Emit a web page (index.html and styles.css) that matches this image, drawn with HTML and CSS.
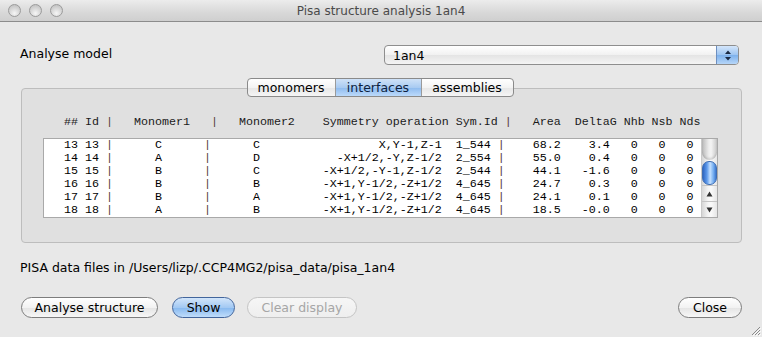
FILE: index.html
```html
<!DOCTYPE html>
<html>
<head>
<meta charset="utf-8">
<link rel="stylesheet" href="styles.css">
</head>
<body>
<div class="window">
  <div class="titlebar">
    <div class="lights"><span class="light"></span><span class="light"></span><span class="light"></span></div>
    <div class="title">Pisa structure analysis 1an4</div>
    <div></div>
  </div>
  <div class="content">
    <div class="model-row">
      <span class="label">Analyse model</span>
      <div class="select">
        <span class="select-text">1an4</span>
        <span class="select-btn">
          <svg width="8" height="11" viewBox="0 0 8 11"><path d="M4 0.5 L7 4 L1 4 Z" fill="#1a2a44"/><path d="M4 10.5 L7 7 L1 7 Z" fill="#1a2a44"/></svg>
        </span>
      </div>
    </div>
    <div class="tabs-wrap">
      <div class="tabs">
        <span class="tab">monomers</span><span class="tab active">interfaces</span><span class="tab">assemblies</span>
      </div>
      <div class="group">
<pre class="header">## Id <span class="sep">|</span>   Monomer1   <span class="sep">|</span>   Monomer2    Symmetry operation Sym.Id <span class="sep">|</span>   Area  DeltaG Nhb Nsb Nds</pre>
        <div class="list">
<pre class="rows">13 13 <span class="sep">|</span>      C      <span class="sep">|</span>      C                 X,Y-1,Z-1  1_544 <span class="sep">|</span>    68.2    3.4   0   0   0
14 14 <span class="sep">|</span>      A      <span class="sep">|</span>      D           -X+1/2,-Y,Z-1/2  2_554 <span class="sep">|</span>    55.0    0.4   0   0   0
15 15 <span class="sep">|</span>      B      <span class="sep">|</span>      C         -X+1/2,-Y-1,Z-1/2  2_544 <span class="sep">|</span>    44.1   -1.6   0   0   0
16 16 <span class="sep">|</span>      B      <span class="sep">|</span>      B         -X+1,Y-1/2,-Z+1/2  4_645 <span class="sep">|</span>    24.7    0.3   0   0   0
17 17 <span class="sep">|</span>      B      <span class="sep">|</span>      A         -X+1,Y-1/2,-Z+1/2  4_645 <span class="sep">|</span>    24.1    0.1   0   0   0
18 18 <span class="sep">|</span>      A      <span class="sep">|</span>      B         -X+1,Y-1/2,-Z+1/2  4_645 <span class="sep">|</span>    18.5   -0.0   0   0   0</pre>
          <div class="scrollbar">
            <div class="sb-track">
              <div class="sb-cap"></div>
              <div class="sb-thumb"></div>
            </div>
            <div class="sb-btn"><svg width="7" height="6" viewBox="0 0 7 6"><path d="M3.5 0.5 L6.5 5.5 L0.5 5.5 Z" fill="#333"/></svg></div>
            <div class="sb-btn"><svg width="7" height="6" viewBox="0 0 7 6"><path d="M3.5 5.5 L6.5 0.5 L0.5 0.5 Z" fill="#333"/></svg></div>
          </div>
        </div>
      </div>
    </div>
    <div class="info">PISA data files in /Users/lizp/.CCP4MG2/pisa_data/pisa_1an4</div>
    <div class="buttons">
      <span class="btn">Analyse structure</span>
      <span class="btn default">Show</span>
      <span class="btn disabled">Clear display</span>
      <span class="btn close">Close</span>
    </div>
  </div>
  <svg class="grip" width="12" height="12" viewBox="0 0 12 12">
    <path d="M11 3 L3 11 M11 6 L6 11 M11 9 L9 11" stroke="#8a8a8a" stroke-width="1"/>
    <path d="M12 4 L4 12 M12 7 L7 12 M12 10 L10 12" stroke="#fafafa" stroke-width="1"/>
  </svg>
</div>
</body>
</html>
```

FILE: styles.css
```css
html, body {
  margin: 0;
  padding: 0;
}
body {
  width: 762px;
  height: 337px;
  overflow: hidden;
  background: #e8e8e8;
  font-family: "DejaVu Sans", "Liberation Sans", sans-serif;
  font-size: 12px;
  color: #000;
}
.window {
  position: relative;
  width: 762px;
  height: 337px;
  background: #e8e8e8;
}
.titlebar {
  height: 21px;
  border-bottom: 1px solid #8c8c8c;
  background: linear-gradient(to bottom, #ececec, #d8d8d8 60%, #cfcfcf);
  display: grid;
  grid-template-columns: 1fr auto 1fr;
  align-items: center;
}
.lights {
  display: flex;
  gap: 8px;
  padding-left: 8px;
}
.light {
  width: 11px;
  height: 11px;
  border-radius: 50%;
  border: 1px solid #9b9b9b;
  background: radial-gradient(circle at 50% 75%, #f6f6f6 0%, #dadada 45%, #b9b9b9 100%);
}
.title {
  font-size: 12px;
  color: #4a4a4a;
  padding-top: 1px;
}
.content {
  padding: 23px 20px 0 21px;
}
.model-row {
  display: flex;
  align-items: center;
  height: 20px;
}
.label {
  font-size: 12.5px;
  margin-left: -1px;
  margin-top: -4px;
}
.select {
  margin-left: auto;
  margin-right: 3px;
  width: 355px;
  height: 20px;
  box-sizing: border-box;
  border: 1px solid #8e8e8e;
  border-radius: 4px;
  background: linear-gradient(to bottom, #ffffff, #f1f1f1 50%, #e4e4e4 51%, #f4f4f4);
  display: flex;
  align-items: center;
  overflow: hidden;
}
.select-text {
  flex: 1;
  padding-left: 8px;
  font-size: 12.5px;
}
.select-btn {
  width: 21px;
  height: 100%;
  border-left: 1px solid #6d8fc0;
  background: linear-gradient(to bottom, #d4e6fb, #9cc4f1 50%, #7db1ec 51%, #b6d6f9);
  display: flex;
  align-items: center;
  justify-content: center;
}
.tabs-wrap {
  margin-top: 13px;
  display: flex;
  flex-direction: column;
  align-items: center;
}
.tabs {
  position: relative;
  z-index: 1;
  display: flex;
  height: 19px;
  box-sizing: border-box;
  border: 1px solid #8a8a8a;
  border-radius: 4px;
  overflow: hidden;
  background: linear-gradient(to bottom, #ffffff, #f3f3f3 50%, #e6e6e6 51%, #f5f5f5);
  margin-left: -3px;
}
.tab {
  display: flex;
  align-items: center;
  justify-content: center;
  font-size: 12.5px;
  border-left: 1px solid #9a9a9a;
  padding-bottom: 1px;
}
.tab:nth-child(1) { width: 87px; border-left: none; }
.tab:nth-child(2) { width: 85px; }
.tab:nth-child(3) { width: 91px; }
.tab.active {
  background: linear-gradient(to bottom, #cfe2f8, #a9cbf2 50%, #8dbaee 51%, #bcdafb);
  color: #0c1f3f;
}
.group {
  align-self: stretch;
  margin-top: -9px;
  height: 155px;
  box-sizing: border-box;
  border: 1px solid #bdbdbd;
  border-radius: 4px;
  background: #e0e0e0;
  padding: 27px 23px 0 21px;
}
pre {
  margin: 0;
  font-family: "Liberation Mono", "DejaVu Sans Mono", monospace;
  font-size: 11.667px;
  line-height: 13px;
  white-space: pre;
}
.header {
  padding-left: 21px;
  color: #1a1a1a;
}
.sep {
  color: #5a3c3c;
}
.list {
  margin-top: 9px;
  height: 80px;
  box-sizing: border-box;
  border: 1px solid #a9a9a9;
  background: #fff;
  display: flex;
}
.rows {
  flex: 1;
  padding-left: 20px;
  overflow: hidden;
}
.scrollbar {
  width: 15px;
  display: flex;
  flex-direction: column;
  border-left: 1px solid #c9c9c9;
  background: linear-gradient(to right, #d6d6d6, #f4f4f4 40%, #fafafa 60%, #e6e6e6);
}
.sb-track {
  flex: 1;
  display: flex;
  flex-direction: column;
}
.sb-cap {
  height: 21px;
  border-radius: 0 0 8px 8px;
  background: linear-gradient(to right, #b9b9b9, #ececec 45%, #f4f4f4 60%, #c8c8c8);
  box-shadow: inset 0 -2px 2px rgba(0,0,0,0.12);
}
.sb-thumb {
  margin-top: 1px;
  height: 24px;
  border-radius: 7px;
  border: 1px solid #3e6db3;
  box-sizing: border-box;
  background: linear-gradient(to right, #2f66c2, #5d99ea 30%, #c4e0ff 55%, #75aef0 80%, #3c77cf);
}
.sb-btn {
  height: 15px;
  border-top: 1px solid #c4c4c4;
  display: flex;
  align-items: center;
  justify-content: center;
}
.info {
  margin-top: 17px;
  font-size: 12.5px;
  line-height: 16px;
  margin-left: -1px;
}
.buttons {
  margin-top: 21px;
  display: flex;
  align-items: center;
}
.btn {
  height: 21px;
  box-sizing: border-box;
  border: 1px solid #7d7d7d;
  border-radius: 11px;
  background: linear-gradient(to bottom, #ffffff, #f2f2f2 50%, #e4e4e4 51%, #f7f7f7);
  display: flex;
  align-items: center;
  justify-content: center;
  font-size: 12.5px;
  padding-bottom: 1px;
}
.btn:nth-child(1) { width: 137px; }
.btn.default {
  width: 63px;
  margin-left: 14px;
  border-color: #42659c;
  background: linear-gradient(to bottom, #d2e5fa, #a3c9f3 50%, #86b8ef 51%, #c0ddfb);
}
.btn.disabled {
  width: 110px;
  margin-left: 12px;
  color: #a6a6a6;
  border-color: #c4c4c4;
  background: linear-gradient(to bottom, #f6f6f6, #eeeeee);
}
.btn.close {
  width: 64px;
  margin-left: auto;
}
.grip {
  position: absolute;
  right: 1px;
  bottom: 1px;
}
```
